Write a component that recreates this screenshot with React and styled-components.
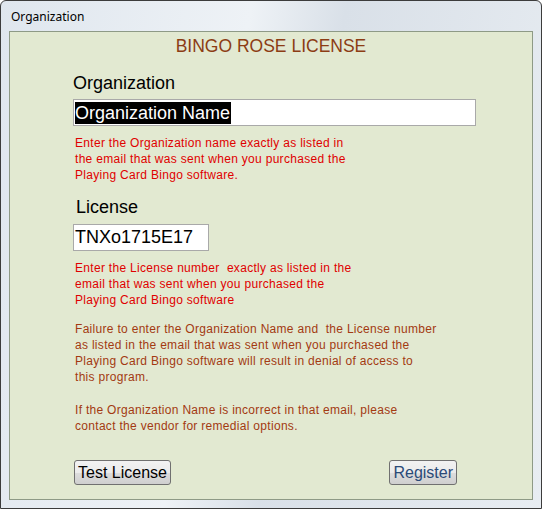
import React from "react";
import styled, { createGlobalStyle } from "styled-components";

const Global = createGlobalStyle`
  html,body{margin:0;padding:0;background:#fff;}
  body{font-family:"Liberation Sans",Arial,sans-serif;}
`;

const Win = styled.div`
  width:542px;height:509px;box-sizing:border-box;
  border:1px solid #3c3c3c;border-radius:6px 6px 0 0;
  background:linear-gradient(100deg,#dfe6ee 0%,#eef2f6 40%,#d9e0e8 55%,#e8edf2 100%);
  display:flex;flex-direction:column;padding:0 8px 8px 8px;
`;
const TitleBar = styled.div`
  height:30px;display:flex;align-items:center;padding-left:2px;
  font-family:"Noto Sans","Liberation Sans",sans-serif;font-size:12px;color:#000;
`;
const Panel = styled.div`
  flex:1;background:#e2e9d1;border:1px solid #8e9a86;
  padding:3px 0 0 63px;display:flex;flex-direction:column;
`;
const Heading = styled.div`
  font-size:17.5px;color:#8c3c14;text-align:center;margin-left:-63px;height:22px;line-height:22px;
`;
const Label = styled.div`
  font-size:18px;color:#000;margin-left:${p=>p.$ml||0}px;margin-top:${p=>p.$mt}px;line-height:22px;
`;
const Input = styled.div`
  box-sizing:border-box;width:${p=>p.$w}px;height:27px;margin-top:${p=>p.$mt}px;
  background:#fff;border:1px solid #a9a9a9;font-size:18px;display:flex;align-items:center;padding-left:1px;
`;
const Sel = styled.span`background:#000;color:#fff;line-height:22px;padding-right:1px;`;
const Note = styled.div`
  font-size:12px;letter-spacing:0.3px;line-height:16px;color:${p=>p.$c};margin-top:${p=>p.$mt}px;margin-left:2px;white-space:pre;
`;
const Buttons = styled.div`
  display:flex;justify-content:space-between;width:383px;margin-top:auto;margin-bottom:14px;margin-left:1px;
`;
const Btn = styled.button`
  height:25px;padding:0 3px;font-family:inherit;font-size:16px;color:${p=>p.$c};
  border:1px solid #707070;border-radius:3px;
  background:linear-gradient(#f2f2f2 0%,#ebebeb 50%,#dddddd 51%,#cfcfcf 100%);
`;

export default function App(){
  return <>
    <Global/>
    <Win>
      <TitleBar>Organization</TitleBar>
      <Panel>
        <Heading>BINGO ROSE LICENSE</Heading>
        <Label $mt={15}>Organization</Label>
        <Input $w={403} $mt={5}><Sel>Organization Name</Sel></Input>
        <Note $c="#e00000" $mt={9}>{"Enter the Organization name exactly as listed in\nthe email that was sent when you purchased the\nPlaying Card Bingo software."}</Note>
        <Label $mt={13} $ml={3}>License</Label>
        <Input $w={136} $mt={6}>TNXo1715E17</Input>
        <Note $c="#e00000" $mt={9}>{"Enter the License number  exactly as listed in the\nemail that was sent when you purchased the\nPlaying Card Bingo software"}</Note>
        <Note $c="#a33a12" $mt={13}>{"Failure to enter the Organization Name and  the License number\nas listed in the email that was sent when you purchased the\nPlaying Card Bingo software will result in denial of access to\nthis program."}</Note>
        <Note $c="#a33a12" $mt={17}>{"If the Organization Name is incorrect in that email, please\ncontact the vendor for remedial options."}</Note>
        <Buttons>
          <Btn $c="#000">Test License</Btn>
          <Btn $c="#2a4a78">Register</Btn>
        </Buttons>
      </Panel>
    </Win>
  </>;
}
